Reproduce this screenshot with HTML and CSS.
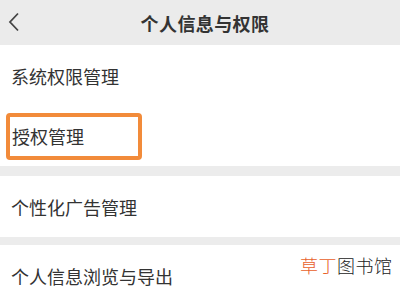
FILE: index.html
```html
<!DOCTYPE html>
<html lang="zh-CN">
<head>
    <meta charset="UTF-8">
    <meta name="viewport" content="width=device-width, initial-scale=1.0">
    <title>个人信息与权限</title>
    <link rel="stylesheet" href="styles.css">
</head>
<body>
    <div class="page">
        <div class="header">
            <svg class="back" width="12" height="20" viewBox="0 0 12 20">
                <path d="M10 1.5 L2 10 L10 18.5" fill="none" stroke="#444" stroke-width="1.8"/>
            </svg>
            <h1>个人信息与权限</h1>
        </div>

        <div class="row">
            <span class="label">系统权限管理</span>
            <span class="arrow"></span>
        </div>
        <div class="row">
            <span class="label highlight">授权管理</span>
            <span class="arrow"></span>
        </div>
        <div class="gap"></div>
        <div class="row">
            <span class="label">个性化广告管理</span>
            <span class="arrow"></span>
        </div>
        <div class="gap small"></div>
        <div class="row">
            <span class="label">个人信息浏览与导出</span>
            <span class="arrow"></span>
        </div>

        <!-- watermark -->
        <div class="watermark"><span class="orange">草丁</span>图书馆</div>
    </div>
</body>
</html>
```

FILE: styles.css
```css
/* General Styles */
body {
    margin: 0;
    font-family: "Noto Sans CJK SC", "Noto Sans", sans-serif;
    background: #ffffff;
    color: #333;
}
.page {
    position: relative;
    width: 400px;
    height: 300px;
    overflow: hidden;
}

/* Header */
.header {
    height: 45px;
    background: #ebebeb;
    display: flex;
    align-items: center;
    justify-content: center;
    position: relative;
}
.header h1 {
    margin: 0;
    font-size: 18px;
    font-weight: bold;
    color: #333;
    letter-spacing: 0.4px;
    padding-left: 10px;
}
.back {
    position: absolute;
    left: 8px;
    top: 12px;
}

/* Rows */
.row {
    height: 61px;
    display: flex;
    align-items: center;
    justify-content: space-between;
    padding-left: 11px;
}
.row + .row {
    height: 60px;
}
.label {
    font-size: 18px;
    font-weight: 400;
    color: #333;
}
.label.highlight {
    position: relative;
    margin-left: 1px;
}
.label.highlight::before {
    content: "";
    position: absolute;
    left: -6px;
    top: -10px;
    width: 128px;
    height: 39px;
    border: 4px solid #f28b3a;
    border-radius: 4px;
}
.arrow {
    width: 6px;
    height: 6px;
    border-top: 1.5px solid #c8c8c8;
    border-right: 1.5px solid #c8c8c8;
    transform: rotate(45deg);
    margin-right: -5px;
}

/* Separators */
.gap {
    height: 10px;
    background: #ececec;
}
.gap.small {
    height: 8px;
}

/* Watermark */
.watermark {
    position: absolute;
    left: 300px;
    top: 252px;
    font-size: 18px;
    font-weight: 300;
    color: #222;
    letter-spacing: 0.5px;
}
.watermark .orange {
    color: #e8602a;
}
```
